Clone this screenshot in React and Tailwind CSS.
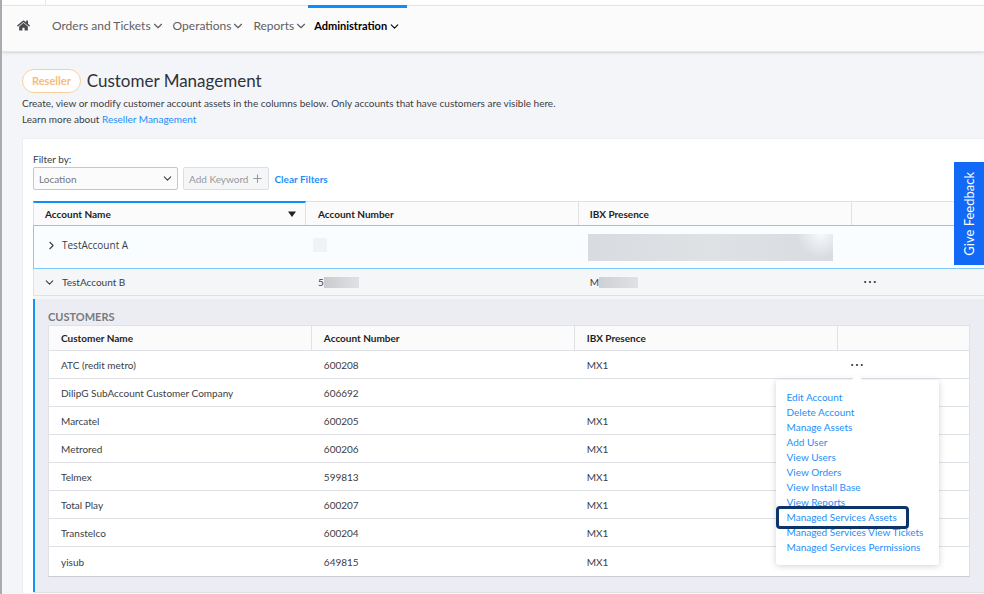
import { FaHome } from 'react-icons/fa';
import { ChevronDown, ChevronRight, Plus } from 'lucide-react';

const navItems = ['Orders and Tickets', 'Operations', 'Reports'];

const customers = [
  ['ATC (redit metro)', '600208', 'MX1'],
  ['DilipG SubAccount Customer Company', '606692', ''],
  ['Marcatel', '600205', 'MX1'],
  ['Metrored', '600206', 'MX1'],
  ['Telmex', '599813', 'MX1'],
  ['Total Play', '600207', 'MX1'],
  ['Transtelco', '600204', 'MX1'],
  ['yisub', '649815', 'MX1'],
];

const actions = [
  'Edit Account',
  'Delete Account',
  'Manage Assets',
  'Add User',
  'View Users',
  'View Orders',
  'View Install Base',
  'View Reports',
  'Managed Services Assets',
  'Managed Services View Tickets',
  'Managed Services Permissions',
];

function Dots() {
  return (
    <svg width="12" height="4" viewBox="0 0 12 4" fill="#30343c" className="block" aria-hidden="true">
      <circle cx="1.2" cy="2" r="1.1" />
      <circle cx="6" cy="2" r="1.1" />
      <circle cx="10.8" cy="2" r="1.1" />
    </svg>
  );
}

function SortArrow() {
  return (
    <svg width="8" height="6" viewBox="0 0 8 6" fill="#1f232b" aria-hidden="true">
      <path d="M0 .5h8L4 6z" />
    </svg>
  );
}

function TopNav() {
  return (
    <header>
      <div className="flex h-[5px] bg-white">
        <div className="w-[44px] border-r border-[#e8e8ea]" />
      </div>
      <nav className="flex h-[47px] items-stretch border-y border-[#e6e6e9] bg-[#fbfbfb] pl-[15px] text-xs text-[#5f5f63] shadow-sm" aria-label="Main">
        <a href="#home" aria-label="Home" className="mr-[22px] flex items-center pb-[6px] text-[#4a4a4e]">
          <FaHome size={13} />
        </a>
        <div className="flex">
          {navItems.map((item) => (
            <button key={item} type="button" className="mr-2 flex items-center pb-[6px]">
              {item}
              <ChevronDown size={14} />
            </button>
          ))}
          <button type="button" className="-mt-px -ml-2 flex items-center gap-px border-t-3 border-[#0d8ffb] px-[6px] pb-[6px] text-[11px] font-bold text-black">
            Administration
            <ChevronDown size={13} />
          </button>
        </div>
      </nav>
    </header>
  );
}

function ActionMenu() {
  return (
    <div className="absolute top-[29px] -left-[73px] z-10 w-[163px] rounded-[3px] bg-white py-[10px] pl-[11px] shadow-[0_1px_6px_rgba(40,50,70,0.22)]">
      <div className="absolute -top-1 left-[77px] size-2 rotate-45 bg-white" />
      <ul>
        {actions.map((action) => (
          <li key={action} className="relative leading-[15px]">
            <a href="#action" className="whitespace-nowrap text-[#1d8ffb]">{action}</a>
            {action === 'Managed Services Assets' && (
              <span className="absolute -top-[4px] -left-[11px] h-[23px] w-[133px] rounded-[4px] border-3 border-[#0b3468]" />
            )}
          </li>
        ))}
      </ul>
    </div>
  );
}

function CustomerTable() {
  return (
    <table className="w-full table-fixed border-separate border-spacing-0 border border-b-[#c9ccd4] border-[#dfe1e7] bg-white text-left">
      <colgroup>
        <col className="w-2/7" />
        <col className="w-2/7" />
        <col className="w-2/7" />
        <col />
      </colgroup>
      <thead>
        <tr className="bg-[#fbfbfb] text-[#1d1f24]">
          {['Customer Name', 'Account Number', 'IBX Presence'].map((h) => (
            <th key={h} className="h-[25px] border-r border-b border-[#dfe1e7] pl-3 font-bold">{h}</th>
          ))}
          <th className="border-b border-[#dfe1e7]" aria-label="Actions" />
        </tr>
      </thead>
      <tbody>
        {customers.map(([name, number, ibx], i) => {
          const line = i < customers.length - 1 ? 'h-[28px] border-b border-[#dfe1e7] pl-3' : 'h-[29px] pl-3';
          return (
            <tr key={name}>
              <td className={line}>{name}</td>
              <td className={line}>{number}</td>
              <td className={line}>{ibx}</td>
              <td className={line}>
                {i === 0 && (
                  <div className="relative w-fit">
                    <button type="button" aria-label="Row actions" className="block px-px"><Dots /></button>
                    <div className="absolute -top-[12px] -left-px"><ActionMenu /></div>
                  </div>
                )}
              </td>
            </tr>
          );
        })}
      </tbody>
    </table>
  );
}

function AccountTable() {
  return (
    <table className="mt-[11px] w-full table-fixed border-separate border-spacing-0 text-left">
      <colgroup>
        <col className="w-[28.7%]" />
        <col className="w-[28.7%]" />
        <col className="w-[28.7%]" />
        <col />
      </colgroup>
      <thead>
        <tr className="bg-[#fbfbfb] text-[#1d1f24]">
          <th className="h-[24px] border-t-2 border-r border-l border-[#dfe1e7] border-t-[#0d8ffb] pr-[9px] pl-[11px] font-bold">
            <div className="flex items-center justify-between">Account Name<SortArrow /></div>
          </th>
          <th className="border-t border-r border-[#dfe1e7] pl-[12px] font-bold">Account Number</th>
          <th className="border-t border-r border-[#dfe1e7] pl-[11px] font-bold">IBX Presence</th>
          <th className="border-t border-[#dfe1e7]" aria-label="Actions" />
        </tr>
      </thead>
      <tbody>
        <tr className="bg-[#f9fdff]">
          <td className="h-[44px] border-y border-l border-[#7fcafb] pl-[11px] font-['Open_Sans',sans-serif]">
            <button type="button" className="mb-1 flex items-center gap-1"><ChevronRight size={13} />TestAccount A</button>
          </td>
          <td className="border-y border-[#7fcafb] pl-[7px]"><div className="mb-1 size-[14px] bg-[#f0f3f6]" /></td>
          <td className="border-y border-[#7fcafb] pl-[9px]" colSpan={2}>
            <div className="h-[27px] w-[245px] bg-[radial-gradient(circle_at_95%_0%,#f6fafc,transparent_24px),linear-gradient(90deg,#d8dbdf,#dfe2e5_50%,#d8dbdf)]" />
          </td>
        </tr>
        <tr className="bg-[#f5f6f8]">
          <td className="h-[27px] border-b border-l border-[#dfe1e7] pl-[9px]">
            <button type="button" className="flex items-center gap-[6px]"><ChevronDown size={13} />TestAccount B</button>
          </td>
          <td className="border-b border-[#dfe1e7] pl-[12px]">
            <div className="flex items-center">5<span className="h-[11px] w-[35px] bg-linear-to-r from-[#c9cbcf] to-[#dfe1e4]" /></div>
          </td>
          <td className="border-b border-[#dfe1e7] pl-[11px]">
            <div className="flex items-center">M<span className="h-[11px] w-[39px] bg-linear-to-r from-[#cfd0d4] to-[#dfe1e4]" /></div>
          </td>
          <td className="border-b border-[#dfe1e7] pl-[12px]">
            <button type="button" aria-label="Row actions" className="block"><Dots /></button>
          </td>
        </tr>
        <tr>
          <td colSpan={4} className="border-t-3 border-b border-t-[#f5f6f8] border-b-[#dfe1e7] p-0">
            <div className="border-l-2 border-[#1793f5] bg-[#ecedf2] pt-[10px] pr-[14px] pb-[15px] pl-[13px]">
              <h2 className="h-4 text-[11px] leading-4 font-bold text-[#77797f]">CUSTOMERS</h2>
              <CustomerTable />
            </div>
          </td>
        </tr>
      </tbody>
    </table>
  );
}

export default function App() {
  return (
    <div className="relative min-h-screen overflow-x-hidden border-l-2 border-[#a9abb0] bg-[#f4f5f8] font-[Lato,sans-serif] text-[10px] leading-4 text-[#3a3d44]">
      <TopNav />
      <main className="pl-5">
        <div className="mt-[17px] flex items-center gap-[6px]">
          <span className="flex h-6 items-center rounded-full border border-[#f9cf9c] bg-white px-[9px] text-[11px] font-bold text-[#f5bd78]">Reseller</span>
          <h1 className="text-[17px] leading-6 text-[#2f323a]">Customer Management</h1>
        </div>
        <p className="mt-[2px]">
          Create, view or modify customer account assets in the columns below. Only accounts that have customers are visible here.
        </p>
        <p>
          Learn more about <a href="#learn" className="text-[#1d8ffb]">Reseller Management</a>
        </p>
        <section className="mt-[11px] border-t border-l border-[#eceef1] bg-white pt-3 pl-[10px]">
          <label htmlFor="filter" className="block">Filter by:</label>
          <div className="flex items-center">
            <div className="relative w-[145px]">
              <select id="filter" className="block h-[23px] w-full appearance-none rounded-[2px] border border-[#c4c6cb] bg-[#fbfbfb] pl-[5px] text-[#75787e]">
                <option>Location</option>
              </select>
              <ChevronDown size={13} className="pointer-events-none absolute top-[5px] right-1" />
            </div>
            <button type="button" className="ml-[5px] flex h-[23px] items-center gap-[3px] rounded-[2px] border border-[#dcdee3] bg-[#f5f6f8] pr-1 pl-[5px] text-[#96989d]">
              Add Keyword <Plus size={13} />
            </button>
            <button type="button" className="ml-[5px] font-bold text-[#1d8ffb]">Clear Filters</button>
          </div>
          <AccountTable />
        </section>
      </main>
      <button type="button" className="absolute top-[162px] right-0 flex h-[103px] w-[30px] items-center justify-center bg-[#1169f5] text-[13px] text-white">
        <span className="rotate-180 [writing-mode:vertical-rl]">Give Feedback</span>
      </button>
    </div>
  );
}
